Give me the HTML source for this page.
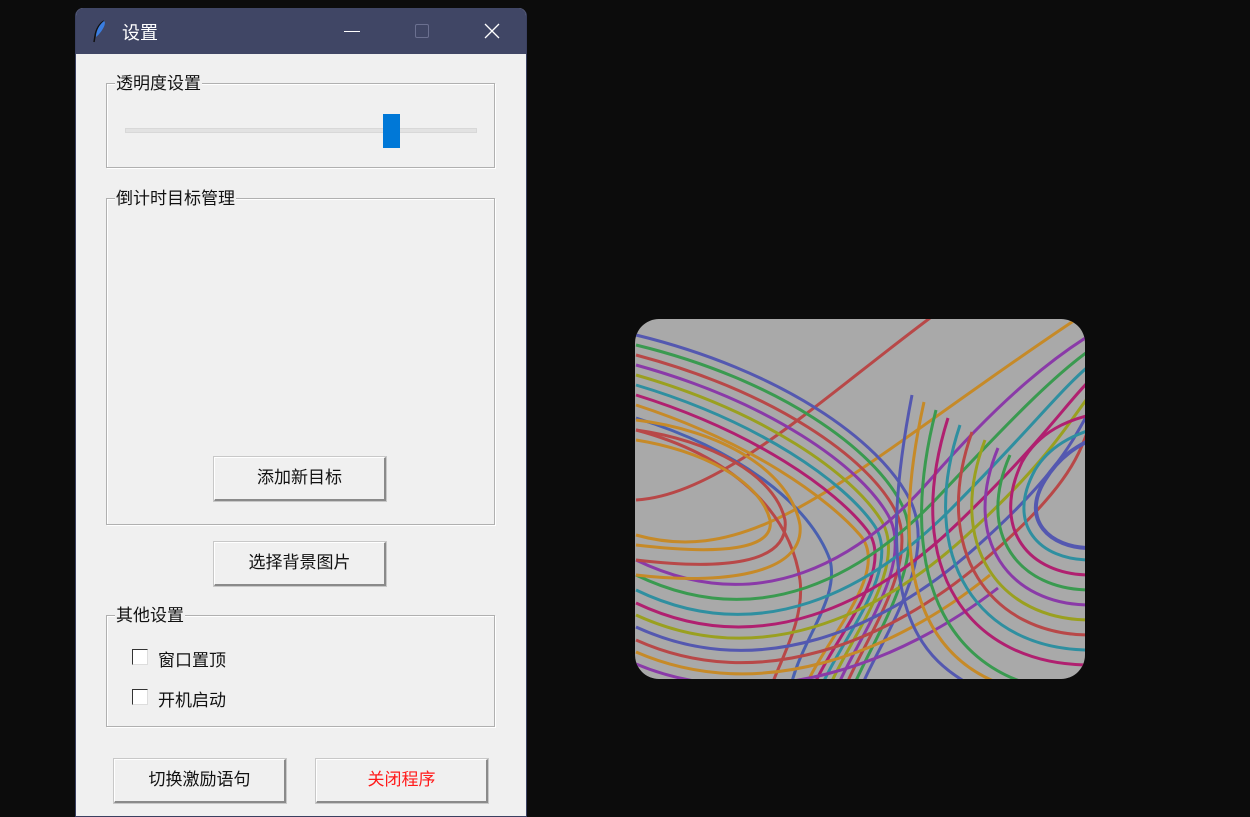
<!DOCTYPE html>
<html><head><meta charset="utf-8"><style>
*{margin:0;padding:0;box-sizing:border-box}
html,body{width:1250px;height:817px;overflow:hidden}
body{background:#0c0c0c;position:relative;font-family:"Liberation Sans","Noto Sans CJK SC",sans-serif;font-size:17px;color:#111}
.a{position:absolute}
.win{left:75px;top:8px;width:452px;height:809px;background:#f0f0f0;border-radius:8px 8px 0 0;border:1px solid #3a4060;border-top:none;overflow:hidden}
.tb{left:0;top:0;width:452px;height:46px;background:#404665;color:#fff}
.grp{border:1px solid #b0b0b0;box-shadow:1px 1px 0 #fff inset,1px 1px 0 #fff}
.lab{background:#f0f0f0;padding:0 1px;line-height:20px}
.btn{background:#f0f0f0;border:1px solid #fff;border-right:2px solid #8a8a8a;border-bottom:2px solid #8a8a8a;outline:1px solid #c8c8c8;text-align:center;line-height:40px;font-size:17px}
.cb{width:16px;height:16px;border:1px solid #333;background:#fff;border-right-color:#ddd;border-bottom-color:#ddd}
</style></head><body>
<div class="a win">
 <div class="a tb">
  <svg class="a" style="left:14px;top:12px" width="20" height="24" viewBox="0 0 20 24"><path d="M14 1 C10 3 6 9 5 16 L4 22" stroke="#111" stroke-width="1.5" fill="none"/><path d="M14 1 C17 3 12 12 6 17 C6 10 10 4 14 1Z" fill="#3a7de0"/></svg>
  <div class="a" style="left:46px;top:11px;font-size:18px">设置</div>
  <div class="a" style="left:268px;top:23px;width:16px;height:1px;background:#fff"></div>
  <div class="a" style="left:339px;top:16px;width:14px;height:14px;border:1px solid #6b7090;border-radius:2px"></div>
  <svg class="a" style="left:408px;top:15px" width="16" height="16"><path d="M1 1L15 15M15 1L1 15" stroke="#fff" stroke-width="1.3"/></svg>
 </div>
</div>
<div class="a grp" style="left:106px;top:83px;width:389px;height:85px"></div>
<div class="a lab" style="left:115px;top:74px">透明度设置</div>
<div class="a" style="left:125px;top:128px;width:352px;height:5px;background:#e2e2e2;border:1px solid #d8d8d8"></div>
<div class="a" style="left:383px;top:114px;width:17px;height:34px;background:#0078d7"></div>
<div class="a grp" style="left:106px;top:198px;width:389px;height:327px"></div>
<div class="a lab" style="left:115px;top:189px">倒计时目标管理</div>
<div class="a btn" style="left:214px;top:457px;width:172px;height:44px">添加新目标</div>
<div class="a btn" style="left:214px;top:542px;width:172px;height:44px">选择背景图片</div>
<div class="a grp" style="left:106px;top:615px;width:389px;height:112px"></div>
<div class="a lab" style="left:115px;top:606px">其他设置</div>
<div class="a cb" style="left:132px;top:649px"></div>
<div class="a" style="left:158px;top:646px">窗口置顶</div>
<div class="a cb" style="left:132px;top:689px"></div>
<div class="a" style="left:158px;top:686px">开机启动</div>
<div class="a btn" style="left:114px;top:759px;width:172px;height:44px">切换激励语句</div>
<div class="a btn" style="left:316px;top:759px;width:172px;height:44px;color:#ff1a1a">关闭程序</div>

<svg class="a" style="left:635px;top:319px" width="450" height="360" viewBox="635 319 450 360">
<defs><clipPath id="c"><rect x="635" y="319" width="450" height="360" rx="24"/></clipPath></defs>
<rect x="635" y="319" width="450" height="360" rx="24" fill="#a9a9a9"/>
<g clip-path="url(#c)" fill="none" stroke-width="3">
<path d="M636,500 C720,495 820,400 930,318" stroke="#b84848"/>
<path d="M636,535 C760,570 850,470 1075,320" stroke="#c68a28"/>
<g>
<path d="M636,335 C780,370 880,440 910,500 S880,640 860,690" stroke="#5458b0"/>
<path d="M636,345 C780,380 875,450 902,505 S872,640 852,690" stroke="#3a9a50"/>
<path d="M636,355 C775,392 868,458 895,510 S864,640 844,690" stroke="#b84848"/>
<path d="M636,365 C770,402 860,466 888,515 S856,640 836,690" stroke="#8a3aa8"/>
<path d="M636,375 C765,412 852,474 881,520 S848,640 828,690" stroke="#9aa020"/>
<path d="M636,385 C760,422 844,482 874,525 S840,640 820,690" stroke="#2f8fa0"/>
<path d="M636,395 C755,432 836,490 867,530 S832,640 812,690" stroke="#b02070"/>
<path d="M636,405 C750,442 828,498 860,535 S824,640 804,690" stroke="#c68a28"/>
<path d="M636,418 C740,450 810,505 830,560 C840,600 800,640 790,690" stroke="#4a60b0"/>
<path d="M636,430 C730,455 790,510 800,580 C805,620 780,660 770,690" stroke="#b84848"/>
</g>
<g>
<path d="M636,560 C760,620 860,560 930,480 S1050,360 1090,335" stroke="#8a3aa8"/>
<path d="M636,575 C760,635 865,575 940,495 S1055,375 1090,350" stroke="#3a9a50"/>
<path d="M636,590 C760,650 870,590 950,510 S1060,390 1090,365" stroke="#2f8fa0"/>
<path d="M636,603 C760,662 875,603 958,523 S1065,405 1090,380" stroke="#b02070"/>
<path d="M636,615 C760,672 880,615 966,536 S1070,420 1090,395" stroke="#9aa020"/>
<path d="M636,627 C760,684 885,628 974,549 S1075,435 1090,410" stroke="#5458b0"/>
<path d="M636,640 C760,696 890,640 982,562 S1080,450 1090,425" stroke="#b84848"/>
<path d="M636,652 C760,706 895,652 990,575" stroke="#c68a28"/>
<path d="M636,664 C760,716 900,664 998,588" stroke="#8a3aa8"/>
</g>
<g>
<path d="M1090,548 C1050,548 1020,520 1045,480 C1060,455 1080,445 1090,440" stroke="#5458b0" stroke-width="4"/>
<path d="M1090,560 C1040,560 1005,525 1035,470 C1050,445 1075,435 1090,430" stroke="#2f8fa0"/>
<path d="M1090,575 C1030,575 990,530 1022,462 C1040,430 1070,420 1090,415" stroke="#b02070"/>
<path d="M1090,590 C1020,590 975,535 1010,455" stroke="#3a9a50"/>
<path d="M1090,605 C1010,605 960,540 998,448" stroke="#8a3aa8"/>
<path d="M1090,620 C1000,620 945,545 985,440" stroke="#9aa020"/>
<path d="M1090,635 C990,635 930,550 972,432" stroke="#b84848"/>
<path d="M1090,650 C980,650 915,560 960,425" stroke="#2f8fa0"/>
<path d="M1090,665 C970,665 900,570 948,418" stroke="#b02070"/>
<path d="M1060,690 C960,680 890,590 936,410" stroke="#3a9a50"/>
<path d="M1020,690 C940,670 880,600 924,402" stroke="#c68a28"/>
<path d="M980,690 C920,660 870,610 912,395" stroke="#5458b0"/>
</g>
<g>
<path d="M636,440 C700,450 760,480 770,520 C775,550 720,555 636,545" stroke="#c68a28"/>
<path d="M636,430 C710,440 775,475 785,520 C790,565 720,570 636,560" stroke="#b84848"/>
<path d="M636,420 C720,430 790,470 800,525 C805,575 720,585 636,575" stroke="#c68a28"/>
</g>
</g>
</svg>
</body></html>
